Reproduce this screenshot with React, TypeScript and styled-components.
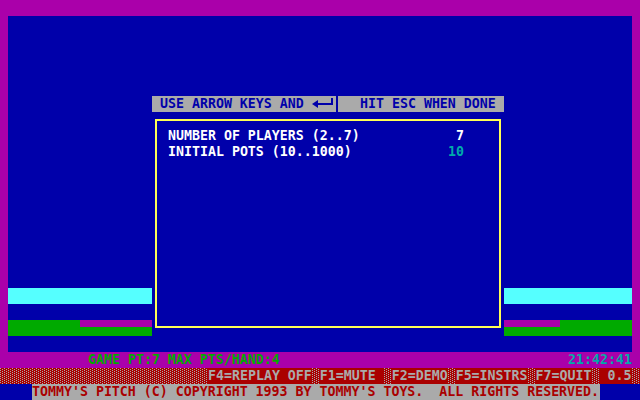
import React from "react";
import styled, { createGlobalStyle, css } from "styled-components";

const C = {
  blue: "#0000aa",
  magenta: "#aa00aa",
  cyan: "#55ffff",
  teal: "#00aaaa",
  green: "#00aa00",
  yellow: "#ffff55",
  gray: "#aaaaaa",
  red: "#aa0000",
  white: "#ffffff",
};

const Global = createGlobalStyle`
  html, body { margin: 0; padding: 0; background: ${C.blue}; }
  #root { width: 640px; height: 400px; overflow: hidden; }
`;

const Screen = styled.div`
  width: 640px;
  height: 400px;
  display: flex;
  flex-direction: column;
  background: ${C.magenta};
  font-family: "DejaVu Sans Mono", "Liberation Mono", monospace;
  font-size: 13.2875px;
  font-weight: bold;
  line-height: 16px;
  white-space: pre;
`;

const Glyphs = styled.span<{ $color: string }>`
  display: inline-block;
  line-height: 16px;
  color: ${(p) => p.$color};
`;

const TopBorder = styled.div`
  height: 16px;
  flex: none;
`;

const Middle = styled.div`
  height: 336px;
  padding: 0 8px;
  display: flex;
  flex: none;
`;

const Playfield = styled.div`
  flex: 1;
  background: ${C.blue};
  display: grid;
  grid-template-columns: 144px 352px 128px;
`;

const SideColumn = styled.div`
  display: flex;
  flex-direction: column;
  gap: 16px;
  padding-top: 272px;
`;

const CyanBar = styled.div`
  height: 16px;
  background: ${C.cyan};
`;

const ScoreBar = styled.div<{ $split: number }>`
  height: 16px;
  background: ${C.green};
  display: grid;
  grid-template-columns: ${(p) => p.$split}px 1fr;
  grid-template-rows: 7px 9px;
`;

const ScoreMark = styled.div<{ $col: number }>`
  grid-column: ${(p) => p.$col};
  grid-row: 1;
  background: ${C.magenta};
`;

const CenterColumn = styled.div`
  display: flex;
  flex-direction: column;
  padding-top: 80px;
`;

const HeaderBar = styled.div`
  height: 16px;
  display: flex;
  gap: 2px;
`;

const HeaderSegment = styled.div<{ $width: number; $pad: number }>`
  width: ${(p) => p.$width}px;
  padding-left: ${(p) => p.$pad}px;
  box-sizing: border-box;
  background: ${C.gray};
  display: flex;
  align-items: center;
`;

const EnterKey = styled.svg`
  display: block;
  width: 24px;
  height: 16px;
`;

const Dialog = styled.div`
  margin: 7px 0 0 3px;
  width: 346px;
  height: 209px;
  box-sizing: border-box;
  border: 2px solid ${C.yellow};
  padding: 7px 0 0 11px;
  display: flex;
  flex-direction: column;
`;

const OptionRow = styled.div`
  width: 296px;
  height: 16px;
  display: flex;
  align-items: center;
  justify-content: space-between;
`;

const StatusRow = styled.div`
  height: 16px;
  display: flex;
  align-items: center;
  padding: 0 8px 0 88px;
  background: ${C.magenta};
`;

const Clock = styled.div`
  margin-left: auto;
  display: flex;
  align-items: center;
`;

const dither = css`
  background-color: ${C.red};
  background-image: conic-gradient(at 1px 1px, transparent 75%, ${C.gray} 0),
    conic-gradient(at 1px 1px, transparent 75%, ${C.gray} 0);
  background-size: 4px 2px;
  background-position: 0 0, 2px 1px;
`;

const KeysRow = styled.div`
  height: 16px;
  display: flex;
  gap: 8px;
  padding-left: 208px;
  ${dither}
`;

const KeyLabel = styled.div`
  background: ${C.red};
  height: 16px;
  display: flex;
  align-items: center;
`;

const CopyrightRow = styled.div`
  height: 16px;
  background: ${C.blue};
  padding-left: 32px;
  display: flex;
`;

const CopyrightText = styled.div`
  width: 568px;
  background: ${C.gray};
  display: flex;
  align-items: center;
`;

const keys = ["F4=REPLAY OFF", "F1=MUTE ", "F2=DEMO", "F5=INSTRS", "F7=QUIT", " 0.5"];

export default function App() {
  return (
    <>
      <Global />
      <Screen>
        <TopBorder />
        <Middle>
          <Playfield>
            <SideColumn>
              <CyanBar />
              <ScoreBar $split={72}>
                <ScoreMark $col={2} />
              </ScoreBar>
            </SideColumn>
            <CenterColumn>
              <HeaderBar>
                <HeaderSegment $width={184} $pad={8}>
                  <Glyphs $color={C.blue}>USE ARROW KEYS AND </Glyphs>
                  <EnterKey viewBox="0 0 24 16">
                    <polygon points="0,8 6,4 6,12" fill={C.blue} />
                    <rect x="6" y="7" width="15" height="2" fill={C.blue} />
                    <rect x="19" y="2" width="2" height="7" fill={C.blue} />
                  </EnterKey>
                </HeaderSegment>
                <HeaderSegment $width={166} $pad={22}>
                  <Glyphs $color={C.blue}>HIT ESC WHEN DONE</Glyphs>
                </HeaderSegment>
              </HeaderBar>
              <Dialog>
                <OptionRow>
                  <Glyphs $color={C.white}>NUMBER OF PLAYERS (2..7)</Glyphs>
                  <Glyphs $color={C.white}>7</Glyphs>
                </OptionRow>
                <OptionRow>
                  <Glyphs $color={C.white}>INITIAL POTS (10..1000)</Glyphs>
                  <Glyphs $color={C.teal}>10</Glyphs>
                </OptionRow>
              </Dialog>
            </CenterColumn>
            <SideColumn>
              <CyanBar />
              <ScoreBar $split={56}>
                <ScoreMark $col={1} />
              </ScoreBar>
            </SideColumn>
          </Playfield>
        </Middle>
        <StatusRow>
          <Glyphs $color={C.green}>GAME PT:7 MAX PTS/HAND:4</Glyphs>
          <Clock>
            <Glyphs $color={C.teal}>21:42:41</Glyphs>
          </Clock>
        </StatusRow>
        <KeysRow>
          {keys.map((k) => (
            <KeyLabel key={k}>
              <Glyphs $color={C.gray}>{k}</Glyphs>
            </KeyLabel>
          ))}
        </KeysRow>
        <CopyrightRow>
          <CopyrightText>
            <Glyphs $color={C.red}>
              TOMMY'S PITCH (C) COPYRIGHT 1993 BY TOMMY'S TOYS.  ALL RIGHTS RESERVED.
            </Glyphs>
          </CopyrightText>
        </CopyrightRow>
      </Screen>
    </>
  );
}
